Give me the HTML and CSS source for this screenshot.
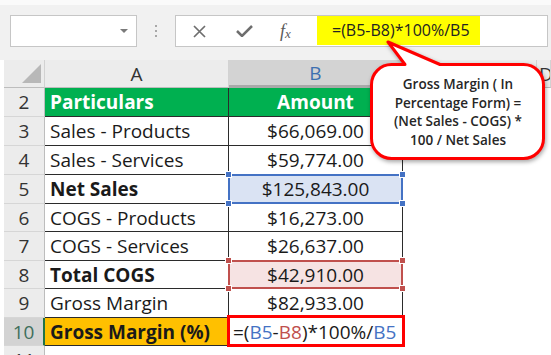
FILE: index.html
```html
<!DOCTYPE html>
<html lang="en">
<head>
  <meta charset="UTF-8" />
  <title>Gross Margin (%)</title>
  <link rel="stylesheet" href="styles.css">
</head>
<body>

  <!-- barra de formulas -->
  <div class="toolbar">
    <div class="namebox">
      <svg width="8" height="4" viewBox="0 0 8 4"><polygon points="0,0 8,0 4,4" fill="#7a7a7a"/></svg>
    </div>
    <div class="grip"><i></i><i></i><i></i></div>
    <div class="formulabar">
      <svg class="ico-x" width="13" height="13" viewBox="0 0 13 13"><path d="M1 1 L12 12 M12 1 L1 12" stroke="#6e6e6e" stroke-width="1.7" fill="none"/></svg>
      <svg class="ico-ok" width="17" height="12" viewBox="0 0 17 12"><polyline points="1,6 6,11 16,1" stroke="#6e6e6e" stroke-width="2.5" fill="none"/></svg>
      <span class="fx">f<sub>x</sub></span>
      <div class="formula">=(B5-B8)*100%/B5</div>
    </div>
  </div>

  <!-- hoja -->
  <div class="sheet">
    <div class="hd corner"><i></i></div>
    <div class="hd">A</div>
    <div class="hd hd-sel">B</div>
    <div class="hd"></div>
    <div class="hd hd-d">D</div>

    <div class="rh">2</div>
    <div class="c green">Particulars</div>
    <div class="c green center">Amount</div>
    <div class="e"></div><div class="e"></div>

    <div class="rh">3</div>
    <div class="c">Sales - Products</div>
    <div class="c center">$66,069.00</div>
    <div class="e"></div><div class="e"></div>

    <div class="rh">4</div>
    <div class="c">Sales - Services</div>
    <div class="c center">$59,774.00</div>
    <div class="e"></div><div class="e"></div>

    <div class="rh">5</div>
    <div class="c bold">Net Sales</div>
    <div class="c center sel-blue">$125,843.00<i class="h tl"></i><i class="h tr"></i><i class="h bl"></i><i class="h br"></i></div>
    <div class="e"></div><div class="e"></div>

    <div class="rh">6</div>
    <div class="c">COGS - Products</div>
    <div class="c center">$16,273.00</div>
    <div class="e"></div><div class="e"></div>

    <div class="rh">7</div>
    <div class="c">COGS - Services</div>
    <div class="c center">$26,637.00</div>
    <div class="e"></div><div class="e"></div>

    <div class="rh">8</div>
    <div class="c bold">Total COGS</div>
    <div class="c center sel-red">$42,910.00<i class="h tl"></i><i class="h tr"></i><i class="h bl"></i><i class="h br"></i></div>
    <div class="e"></div><div class="e"></div>

    <div class="rh">9</div>
    <div class="c">Gross Margin</div>
    <div class="c center">$82,933.00</div>
    <div class="e"></div><div class="e"></div>

    <div class="rh rh-sel">10</div>
    <div class="c orange bold">Gross Margin (%)</div>
    <div class="c edit">=(<span class="ref-b">B5</span>-<span class="ref-r">B8</span>)*100%/<span class="ref-b">B5</span></div>
    <div class="e"></div><div class="e"></div>

    <div class="rh">11</div>
    <div class="e"></div><div class="e"></div><div class="e"></div><div class="e"></div>
  </div>

  <!-- llamada -->
  <div class="callout">
    <svg width="195" height="125" viewBox="355 38 195 125">
      <path d="M391.5 64.5 L405 64.5 L388 42 L440 64.5 L523.5 64.5 A20 20 0 0 1 543.5 84.5 L543.5 138.5 A20 20 0 0 1 523.5 158.5 L391.5 158.5 A20 20 0 0 1 371.5 138.5 L371.5 84.5 A20 20 0 0 1 391.5 64.5 Z"
            fill="#fff" stroke="#ff0000" stroke-width="3" stroke-linejoin="round"/>
    </svg>
    <div class="callout-text">Gross Margin ( In<br>Percentage Form) =<br>(Net Sales - COGS) *<br>100 / Net Sales</div>
  </div>

</body>
</html>
```

FILE: styles.css
```css
* { box-sizing: border-box; }
html, body {
  height: 355px;
  overflow: hidden;
}
body {
  margin: 0;
  position: relative;
  font-family: 'Open Sans', sans-serif;
  background: #fff;
  color: #1a1a1a;
}

/* barra superior */
.toolbar {
  height: 60px;
  background: #f1f1f1;
  border-top: 5px solid #fafafa;
  padding-top: 10px;
  display: flex;
  align-items: flex-start;
}
.namebox {
  margin-left: 10px;
  width: 127px;
  height: 32px;
  background: #fff;
  border: 1px solid #c6c6c6;
  display: flex;
  align-items: center;
  justify-content: flex-end;
  padding-right: 8px;
}
.grip {
  margin: 10px 0 0 18px;
  width: 3px;
  display: flex;
  flex-direction: column;
  gap: 3px;
}
.grip i {
  display: block;
  width: 2px;
  height: 2px;
  background: #a8a8a8;
}
.formulabar {
  margin-left: 17px;
  margin-right: 3px;
  flex: 1;
  height: 32px;
  background: #fff;
  border: 1px solid #c6c6c6;
  display: flex;
  align-items: center;
  padding-left: 17px;
}
.ico-ok { margin-left: 30px; }
.fx {
  margin-left: 27px;
  width: 18px;
  font-family: 'Liberation Serif', serif;
  font-style: italic;
  font-size: 18px;
  color: #5a5a5a;
  line-height: 1;
}
.fx sub {
  font-size: 13px;
  vertical-align: -1px;
}
.formula {
  margin-left: 19px;
  align-self: flex-start;
  width: 163px;
  height: 29px;
  background: #ffff00;
  padding-left: 15px;
  font-size: 16px;
  line-height: 29px;
  color: #222;
}

/* hoja de calculo */
.sheet {
  margin-left: 4px;
  display: grid;
  grid-template-columns: 41px 184px 174px 134px 1fr;
  grid-template-rows: 28px 29px 29px 29px 29px 28px 29px 28px 29px 28px 29px;
  font-size: 19px;
}
.hd {
  background: #ececec;
  border-right: 1px solid #d2d2d2;
  border-bottom: 1px solid #bdbdbd;
  display: flex;
  align-items: center;
  justify-content: center;
  color: #333;
}
.hd-sel {
  background: #d3d3d3;
  border-bottom: 3px solid #a9a9a9;
  color: #3d6fb0;
}
.hd-d {
  justify-content: flex-start;
  padding-left: 2px;
  overflow: hidden;
}
.corner {
  align-items: flex-end;
  justify-content: flex-end;
  padding: 0 3px 4px 0;
}
.corner i {
  display: block;
  width: 19px;
  height: 19px;
  background: #b8b8b8;
  clip-path: polygon(100% 0, 100% 100%, 0 100%);
}
.rh {
  background: #ececec;
  border-right: 1px solid #bdbdbd;
  border-bottom: 1px solid #d6d6d6;
  display: flex;
  align-items: center;
  justify-content: center;
  color: #333;
}
.rh-sel {
  background: #d3d3d3;
  border-right: 2px solid #217346;
  color: #3f6f5c;
}
.c {
  position: relative;
  background: #fff;
  border-right: 1px solid #2b2b2b;
  border-bottom: 1px solid #2b2b2b;
  display: flex;
  align-items: center;
  padding: 0 5px;
  white-space: nowrap;
}
.e { background: #fff; }
.center { justify-content: center; }
.bold { font-weight: bold; }
.green {
  background: #00b050;
  color: #fff;
  font-weight: bold;
}
.orange { background: #ffc000; }

/* rangos de la formula */
.sel-blue { background: #dae3f3; }
.sel-red { background: #f6e3e3; }
.sel-blue::after, .sel-red::after {
  content: '';
  position: absolute;
  inset: -1px -1px -1px -1px;
  border: 2px solid #4472c4;
}
.sel-red::after { border-color: #c0504d; }
.h {
  position: absolute;
  width: 7px;
  height: 7px;
  background: #4472c4;
  border: 1px solid #fff;
  z-index: 2;
}
.sel-red .h { background: #c0504d; }
.tl { left: -4px; top: -4px; }
.tr { right: -4px; top: -4px; }
.bl { left: -4px; bottom: -4px; }
.br { right: -4px; bottom: -4px; }

.edit { padding-left: 4px; }
.edit::after {
  content: '';
  position: absolute;
  inset: -3px -3px -2px -2px;
  border: 3px solid #ff0000;
}
.ref-b { color: #4472c4; }
.ref-r { color: #c0504d; }

/* llamada */
.callout {
  position: absolute;
  left: 355px;
  top: 38px;
  width: 195px;
  height: 125px;
}
.callout svg {
  display: block;
  filter: drop-shadow(1px 2px 2px rgba(0,0,0,0.35));
}
.callout-text {
  position: absolute;
  left: 17px;
  top: 28px;
  width: 172px;
  height: 92px;
  display: flex;
  align-items: center;
  justify-content: center;
  text-align: center;
  font-size: 13.5px;
  font-weight: 600;
  line-height: 18.5px;
  color: #262626;
}
```
